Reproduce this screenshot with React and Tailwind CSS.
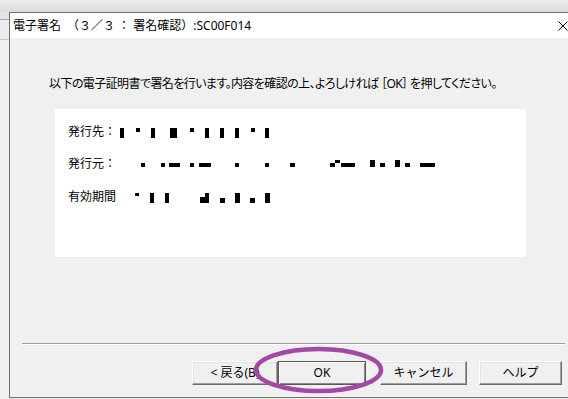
import React from "react";

const row1 = [
  [65, 4, 4, 10], [81, 4, 4, 4], [96, 4, 4, 10], [115, 4, 7, 10], [135, 4, 4, 4],
  [150, 4, 4, 10], [165, 4, 4, 10], [180, 4, 4, 10], [196, 4, 4, 4], [210, 4, 4, 10],
];
const row2 = [
  [86, 7, 4, 4], [106, 7, 4, 4], [114, 7, 11, 4], [135, 7, 4, 4], [144, 7, 12, 4],
  [180, 7, 4, 4], [210, 7, 4, 4], [235, 7, 5, 4], [275, 7, 5, 4], [280, 4, 5, 3],
  [286, 7, 14, 4], [315, 4, 5, 7], [325, 7, 5, 4], [340, 4, 5, 7], [350, 7, 5, 4],
  [365, 7, 15, 4],
];
const row3 = [
  [80, 4, 4, 3], [95, 4, 4, 10], [110, 4, 4, 10], [145, 8, 5, 6], [150, 4, 4, 10],
  [165, 9, 5, 5], [180, 4, 5, 10], [195, 9, 5, 5], [210, 4, 5, 10],
];

function Row({ label, blocks, className }) {
  return (
    <div className={"relative h-[16px] leading-[16px] pl-[13px] " + (className || "")}>
      <span>{label}</span>
      {blocks.map(([x, y, w, h], i) => (
        <span
          key={i}
          className="absolute bg-black"
          style={{ left: x, top: y, width: w, height: h }}
        />
      ))}
    </div>
  );
}

function Btn({ children, def }) {
  return (
    <div
      className={
        "h-[24px] flex items-center justify-center bg-[#f0f0f0] text-[12px] leading-[16px] text-black " +
        (def
          ? "border border-[#5a5a5a] shadow-[inset_1px_1px_0_#ffffff,inset_-1px_-1px_0_#8a8a8a]"
          : "border border-t-[#ffffff] border-l-[#ffffff] border-b-[#6b6b6b] border-r-[#6b6b6b] shadow-[inset_-1px_-1px_0_#a0a0a0,inset_1px_1px_0_#e3e3e3]")
      }
    >
      {children}
    </div>
  );
}

export default function App() {
  return (
    <div className="relative w-[568px] h-[399px] overflow-hidden bg-[#f0f0f0] text-black font-['Noto_Sans','Noto_Sans_CJK_JP',sans-serif]">
      <div className="h-[12px] bg-gradient-to-b from-[#ececec] to-[#dcdcdc]" />
      <div className="flex">
        <div className="w-[9px] flex flex-col">
          <div className="h-[7px] bg-[#e4e4e4]" />
          <div className="h-px bg-[#a8a8a8]" />
          <div className="h-[19px] bg-[#ececec]" />
          <div className="h-px bg-[#c4c4c4]" />
          <div className="flex-1 bg-[#f0f0f0]" />
        </div>
        <div className="flex-1 h-[386px] flex flex-col border-l border-t border-b border-[#707070]">
          <div className="h-[25px] bg-white flex items-center justify-between pl-[3px]">
            <span className="text-[12px] leading-[16px] whitespace-pre">電子署名　（３／３ ： 署名確認）:SC00F014</span>
            <svg width="10" height="10" viewBox="0 0 10 10" className="shrink-0">
              <path d="M0.5 0.5 L9.5 9.5 M9.5 0.5 L0.5 9.5" stroke="#000" strokeWidth="1" fill="none" />
            </svg>
          </div>
          <div className="flex-1 flex flex-col pt-[38px]">
            <p className="pl-[39px] text-[12px] leading-[16px] tracking-[-0.58px] whitespace-nowrap [font-feature-settings:'palt']">
              以下の電子証明書で署名を行います。内容を確認の上、よろしければ ［OK］ を押してください。
            </p>
            <div className="ml-[45px] mt-[17px] w-[471px] h-[148px] bg-white pt-[15px] text-[12px]">
              <Row label="発行先：" blocks={row1} />
              <Row label="発行元：" blocks={row2} className="mt-[16px]" />
              <Row label="有効期間" blocks={row3} className="mt-[17px]" />
            </div>
            <div className="mt-[86px] ml-[12px] mr-[3px] h-[2px] border-t border-[#a0a0a0] border-b border-b-white" />
            <div className="mt-[16px] ml-[182px] flex">
              <div className="w-[86px]"><Btn>&lt; 戻る(B)</Btn></div>
              <div className="w-[88px]"><Btn def>OK</Btn></div>
              <div className="w-[87px] ml-[14px]"><Btn>キャンセル</Btn></div>
              <div className="w-[83px] ml-[12px]"><Btn>ヘルプ</Btn></div>
            </div>
          </div>
        </div>
      </div>
      <svg className="absolute left-[250px] top-[344px]" width="140" height="54" viewBox="0 0 140 54">
        <ellipse cx="68.5" cy="26" rx="62.5" ry="21" fill="none" stroke="#a349a4" strokeWidth="4.5" />
      </svg>
    </div>
  );
}
